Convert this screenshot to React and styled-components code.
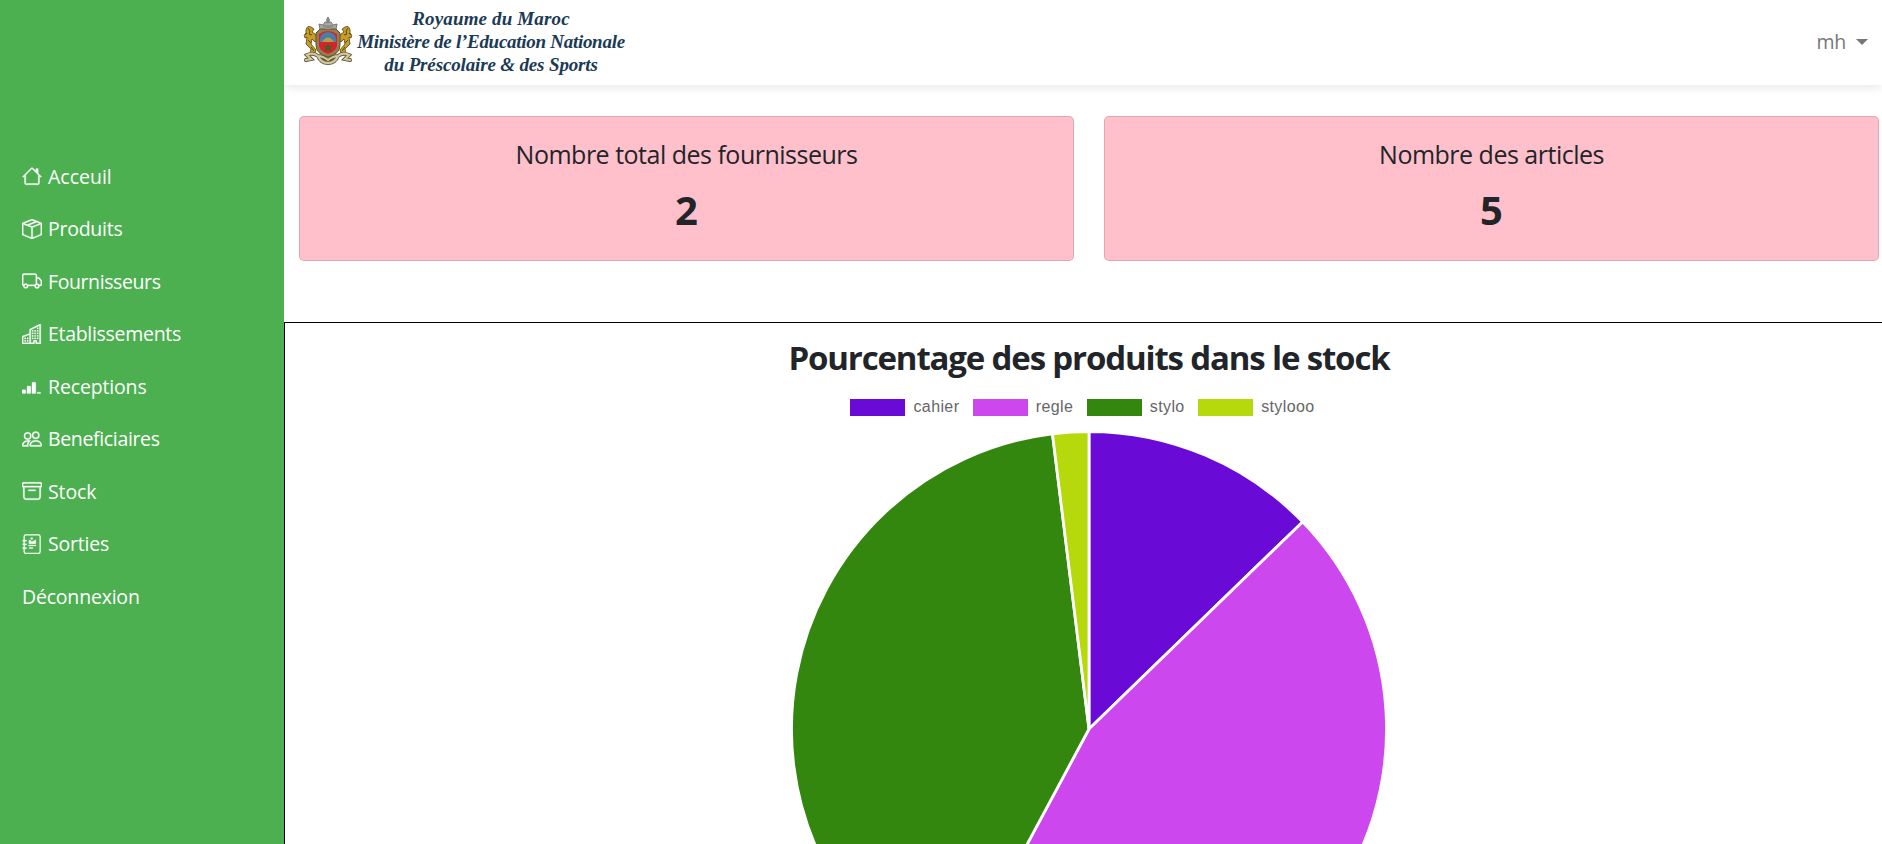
import React from 'react';
import styled, { createGlobalStyle } from 'styled-components';
import { BsHouse, BsBoxSeam, BsTruck, BsBuildings, BsReception3, BsPeople, BsArchive } from 'react-icons/bs';

const Global = createGlobalStyle`
  * { box-sizing: border-box; }
  body { margin: 0; overflow: hidden; background: #fff; color: #212529; font-family: "Open Sans", "Noto Sans", sans-serif; }
`;
const Shell = styled.div`display: flex; height: 844px;`;
const Sidebar = styled.nav`
  position: relative; z-index: 1;
  width: 284px; flex: none; background: #4caf50; padding: 150px 0 0 22px;
`;
const NavItem = styled.a`
  display: flex; align-items: center; height: 52.5px; gap: 6px;
  color: #fff; font-size: 19.5px; letter-spacing: ${p => p.$track}px;
  svg { width: 20px; height: 20px; flex: none; stroke: #fff; stroke-width: .25px; }
`;
const Main = styled.main`flex: 1; min-width: 0; display: flex; flex-direction: column;`;
const Header = styled.header`
  height: 85px; flex: none; display: flex; justify-content: space-between; align-items: center;
  padding: 0 14px 2px 19px; box-shadow: 0 2px 10px rgba(0,0,0,.1);
`;
const Brand = styled.div`display: flex; align-items: center;`;
const Ministry = styled.div`
  width: 270px; margin-left: 3px; text-align: center; white-space: nowrap; color: #1b3a54;
  font: italic bold 19px/23.3px "Liberation Serif", serif;
`;
const MinistryLine = styled.div`letter-spacing: ${p => p.$track}px;`;
const User = styled.div`
  display: flex; align-items: center; gap: 10px; color: #777; font-size: 19.5px; letter-spacing: -.3px;
  &::after { content: ""; border: 6px solid transparent; border-top-color: #777; border-bottom: 0; }
`;
const Cards = styled.section`
  display: grid; grid-template-columns: 1fr 1fr; gap: 30px; padding: 31px 3px 0 15px; flex: none;
`;
const Card = styled.div`
  height: 145px; border: 1px solid rgba(0,0,0,.125); border-radius: 5px; background: #ffc0cb;
  text-align: center; padding-top: 19px;
`;
const CardTitle = styled.div`font-size: 25px; line-height: 36px; letter-spacing: -.5px;`;
const CardValue = styled.div`font-size: 40px; line-height: 48px; font-weight: 700; margin-top: 14px;`;
const Panel = styled.section`
  margin-top: 61px; border: 1px solid #000; border-width: 1px 0 0 1px; flex: 1;
  display: flex; flex-direction: column; align-items: center; overflow: hidden; padding-left: 11px;
`;
const Title = styled.h2`
  margin: 13px 0 0; font-size: 33px; line-height: 44px; font-weight: 700; letter-spacing: -1.15px; white-space: nowrap;
`;
const Legend = styled.div`
  display: flex; gap: 13.5px; margin: 18px 13px 0 0; height: 18px; align-items: center;
  font: 16px/18px "Liberation Sans", sans-serif; letter-spacing: .38px; color: #666;
`;
const LegendItem = styled.span`
  display: flex; align-items: center; gap: 8px;
  &::before { content: ""; width: 55px; height: 17px; background: ${p => p.$color}; }
`;
const Chart = styled.svg`display: block; flex: none; margin-top: 14px;`;
const NoteCover = styled.rect`fill: none; stroke-width: 1px;`;

function SpiralNote() {
  return (
    <svg viewBox="0 0 16 16" fill="currentColor">
      <NoteCover x="1.7" y=".6" width="12.8" height="14.8" rx="1.3" />
      <path d="M.6 4.800h3v1h-3zM.6 7.800h3v1h-3zM.6 10.800h3v1h-3zM7 3h1.500v1.200H7zM5.500 5h1.500v1h1.500l2.500-1.500v3.200H5.500zM5.200 8.800h6v.8h-6zM5.700 10.800h3v.8h-3z" />
    </svg>
  );
}

const NAV = [
  { label: 'Acceuil', Icon: BsHouse, track: 0 },
  { label: 'Produits', Icon: BsBoxSeam, track: -0.25 },
  { label: 'Fournisseurs', Icon: BsTruck, track: -0.4 },
  { label: 'Etablissements', Icon: BsBuildings, track: -0.3 },
  { label: 'Receptions', Icon: BsReception3, track: -0.15 },
  { label: 'Beneficiaires', Icon: BsPeople, track: -0.35 },
  { label: 'Stock', Icon: BsArchive, track: -0.1 },
  { label: 'Sorties', Icon: SpiralNote, track: -0.2 },
  { label: 'Déconnexion', Icon: null, track: -0.2 },
];
const DATA = [
  { name: 'cahier', value: 13, color: '#6a0ad6' },
  { name: 'regle', value: 46, color: '#cc47ee' },
  { name: 'stylo', value: 41, color: '#34870e' },
  { name: 'stylooo', value: 2, color: '#b6d90b' },
];

function Pie() {
  const r = 297.5, c = 299;
  const total = DATA.reduce((s, d) => s + d.value, 0);
  let acc = 0;
  const pt = v => {
    const a = (v / total) * Math.PI * 2;
    return `${c + r * Math.sin(a)} ${c - r * Math.cos(a)}`;
  };
  return (
    <Chart width="598" height="598">
      {DATA.map(d => {
        const from = pt(acc);
        acc += d.value;
        return <path key={d.name} d={`M${c} ${c}L${from}A${r} ${r} 0 0 1 ${pt(acc)}Z`} fill={d.color} stroke="#fff" strokeWidth="2.8" strokeLinejoin="bevel" />;
      })}
    </Chart>
  );
}

function Lion() {
  return (
    <g>
      <path d="M3 13q1-5 5-3l3 2-2 3 3 2 3 5-3 3-3-3-1 5 5 6-1 4-5-1 1-4-5-5 1-7-2 1q-2-3 1-5z" fill="#c99d25" stroke="#54440f" strokeWidth=".8" />
      <path d="M5 11l2 3-1 3 3 1M5 23l3 3M8 30l3 4M4 16l-2 2" fill="none" stroke="#594615" strokeWidth="1" />
    </g>
  );
}

function Crest() {
  return (
    <svg width="50" height="48" viewBox="0 0 50 48">
      <Lion />
      <g transform="matrix(-1 0 0 1 50 0)"><Lion /></g>
      <g fill="none" strokeLinecap="round">
        <path d="M3 43l5-1-4-4q6-3 11 1 3 7 10 7t10-7q5-4 11-1l-4 4 5 1M15 39q5 0 10 4 5-4 10-4" stroke="#665b3a" strokeWidth="4" />
        <path d="M3 43l5-1-4-4q6-3 11 1 3 7 10 7t10-7q5-4 11-1l-4 4 5 1M15 39q5 0 10 4 5-4 10-4" stroke="#d2c89e" strokeWidth="2.2" />
      </g>
      <path d="M13 16l4-4h16l4 4v12q0 9-12 12-12-3-12-12z" fill="#94804c" stroke="#5b5138" />
      <path d="M16 17q9-6 18 0v11q0 6-9 9-9-3-9-9z" fill="#d8222b" />
      <path d="M17 22q0-6 8-7 8 1 8 7v3H17z" fill="#477fab" />
      <path d="M19 25q6-9 12 0z" fill="#b89d45" />
      <path d="M25 26l1.500 3h3l-2 2 1 4-3.500-2-3.500 2 1-4-2-2h3z" fill="#4b5b25" />
      <path d="M17 12l-1-5 4 1 2-3h6l2 3 4-1-1 5q-8-3-16 0z" fill="#a9a9a0" stroke="#777" />
      <path d="M25 0l1.500 3-1.500 3-1.500-3zM20 9h10" fill="#999" stroke="#777" />
    </svg>
  );
}

export default function App() {
  return (
    <>
      <Global />
      <Shell>
        <Sidebar>
          {NAV.map(({ label, Icon, track }) => (
            <NavItem key={label} $track={track}>{Icon && <Icon />}<span>{label}</span></NavItem>
          ))}
        </Sidebar>
        <Main>
          <Header>
            <Brand>
              <Crest />
              <Ministry>
                <MinistryLine $track={0.15}>Royaume du Maroc</MinistryLine>
                <MinistryLine $track={-0.28}>Ministère de l’Education Nationale</MinistryLine>
                <MinistryLine $track={-0.15}>du Préscolaire &amp; des Sports</MinistryLine>
              </Ministry>
            </Brand>
            <User>mh</User>
          </Header>
          <Cards>
            <Card><CardTitle>Nombre total des fournisseurs</CardTitle><CardValue>2</CardValue></Card>
            <Card><CardTitle>Nombre des articles</CardTitle><CardValue>5</CardValue></Card>
          </Cards>
          <Panel>
            <Title>Pourcentage des produits dans le stock</Title>
            <Legend>{DATA.map(d => <LegendItem key={d.name} $color={d.color}>{d.name}</LegendItem>)}</Legend>
            <Pie />
          </Panel>
        </Main>
      </Shell>
    </>
  );
}
